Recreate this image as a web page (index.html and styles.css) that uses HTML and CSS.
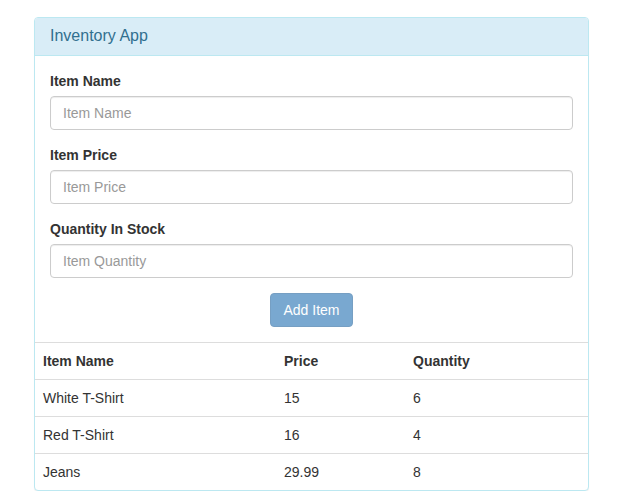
FILE: index.html
```html
<!DOCTYPE html>
<html>
<head>
<meta charset="utf-8">
<link rel="stylesheet" href="styles.css">
</head>
<body>
<div class="panel">
  <div class="panel-heading">Inventory App</div>
  <div class="panel-body">
    <div class="form-group">
      <label>Item Name</label>
      <input class="form-control" type="text" placeholder="Item Name">
    </div>
    <div class="form-group">
      <label>Item Price</label>
      <input class="form-control" type="text" placeholder="Item Price">
    </div>
    <div class="form-group">
      <label>Quantity In Stock</label>
      <input class="form-control" type="text" placeholder="Item Quantity">
    </div>
    <div class="actions">
      <button class="btn" disabled>Add Item</button>
    </div>
  </div>
  <table class="table">
    <thead>
      <tr><th class="c1">Item Name</th><th class="c2">Price</th><th>Quantity</th></tr>
    </thead>
    <tbody>
      <tr><td>White T-Shirt</td><td>15</td><td>6</td></tr>
      <tr><td>Red T-Shirt</td><td>16</td><td>4</td></tr>
      <tr><td>Jeans</td><td>29.99</td><td>8</td></tr>
    </tbody>
  </table>
</div>
</body>
</html>
```
FILE: styles.css
```css
* { box-sizing: border-box; }
body {
  margin: 0;
  padding: 17px 0 0 34px;
  font-family: "Liberation Sans", Arial, sans-serif;
  font-size: 14px;
  line-height: 20px;
  color: #333;
  background: #fff;
}
.panel {
  width: 555px;
  border: 1px solid #bce8f1;
  border-radius: 4px;
  box-shadow: 0 1px 1px rgba(0,0,0,.05);
  overflow: hidden;
  background: #fff;
}
.panel-heading {
  background: #d9edf7;
  color: #31708f;
  border-bottom: 1px solid #bce8f1;
  padding: 10px 15px;
  font-size: 16px;
  line-height: 16.6px;
}
.panel-body {
  padding: 15px;
}
.form-group {
  margin-bottom: 15px;
}
label {
  display: block;
  font-weight: bold;
  margin-bottom: 5px;
}
.form-control {
  display: block;
  width: 100%;
  height: 34px;
  padding: 6px 12px;
  font-family: inherit;
  font-size: 14px;
  color: #555;
  border: 1px solid #ccc;
  border-radius: 4px;
  box-shadow: inset 0 1px 1px rgba(0,0,0,.075);
  background: #fff;
}
.form-control::placeholder { color: #999; }
.actions {
  display: flex;
  justify-content: center;
}
.btn {
  font-family: inherit;
  font-size: 14px;
  line-height: 20px;
  padding: 6px 12px;
  color: #fff;
  background: #337ab7;
  border: 1px solid #2e6da4;
  border-radius: 4px;
  opacity: .65;
}
.table {
  width: 100%;
  border-collapse: collapse;
  border-spacing: 0;
}
.table th, .table td {
  text-align: left;
  padding: 8px;
  line-height: 20px;
  border-top: 1px solid #ddd;
}
.table th { font-weight: bold; }
.table .c1 { width: 241px; }
.table .c2 { width: 129px; }
```
